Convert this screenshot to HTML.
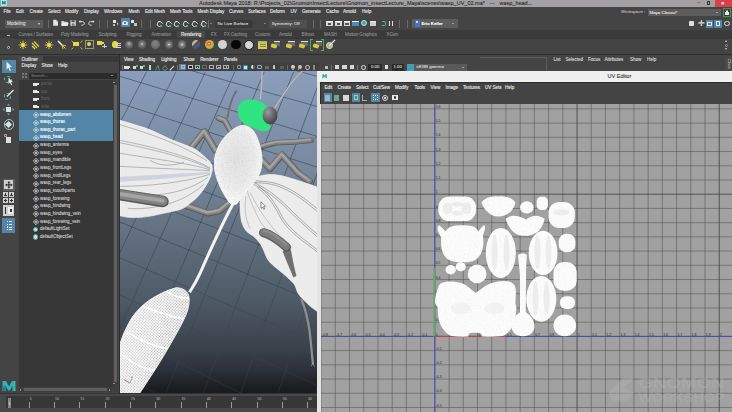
<!DOCTYPE html><html><head><meta charset="utf-8"><title>Autodesk Maya 2018</title><style>
*{margin:0;padding:0;box-sizing:border-box}
html,body{width:732px;height:412px;overflow:hidden;background:#444;font-family:"Liberation Sans",sans-serif;}
body{position:relative;color:#ccc;font-size:5.4px;line-height:1}
.a{position:absolute}
.t{position:absolute;white-space:nowrap;line-height:1;-webkit-text-stroke:0.1px currentColor}
#title{left:0;top:0;width:732px;height:7.1px;background:#a2a0a2}
#menubar{left:0;top:7.3px;width:732px;height:8.7px;background:#444}
#status{left:0;top:16px;width:732px;height:14px;background:#444}
#shelf{left:0;top:30px;width:732px;height:25px;background:#444}
.mi{color:#e8e8e8;font-size:4.6px;top:9.8px;-webkit-text-stroke:0.12px #e8e8e8;letter-spacing:-0.06px}
.tab{color:#9a9a9a;font-size:4.5px;top:32.8px;letter-spacing:-0.06px}
.ol{color:#d0d0d0;font-size:4.5px;-webkit-text-stroke:0.1px currentColor;letter-spacing:-0.04px}
.vm{color:#e8e8e8;font-size:4.5px;top:58.4px;-webkit-text-stroke:0.12px #e8e8e8;letter-spacing:-0.08px}
.um{color:#e8e8e8;font-size:4.6px;top:85.5px;-webkit-text-stroke:0.12px #e8e8e8;letter-spacing:-0.06px}
.ul{fill:#262626;font-size:3.5px;font-family:"Liberation Sans",sans-serif}
</style></head><body>
<div id="title" class="a"></div>
<div class="t" style="left:199px;top:1.2px;font-size:5.5px;color:#2a2a2a">Autodesk Maya 2018: R:\Projects_02\GnomonInsectLecture\Gnomon_insectLecture_Maya\scenes\wasp_UV_02.ma*&nbsp;&nbsp; ---&nbsp;&nbsp; wasp_head...</div>
<div class="a" style="left:1px;top:0;width:6px;height:5.8px;background:#a8eaea"></div>
<svg class="a" style="left:2px;top:1px" width="3.8" height="3.6" viewBox="0 0 7 7" preserveAspectRatio="none"><path d="M0 0 L2 0 L3.5 2.4 L5 0 L7 0 L7 7 L5 7 L3.5 4.6 L2 7 L0 7Z" fill="#1f8a88"/></svg>
<div class="a" style="left:714.6px;top:0;width:17.4px;height:6.5px;background:#d9404a"></div>
<div class="t" style="left:721px;top:-0.2px;font-size:6px;color:#fff">×</div>
<div class="t" style="left:697px;top:-1px;font-size:6px;color:#333">–</div>
<div class="a" style="left:706.5px;top:1.2px;width:3.6px;height:3.6px;border:0.6px solid #333"></div>
<div id="menubar" class="a"></div>
<div class="t mi" style="left:3.5px">File</div>
<div class="t mi" style="left:16px">Edit</div>
<div class="t mi" style="left:29.5px">Create</div>
<div class="t mi" style="left:48px">Select</div>
<div class="t mi" style="left:65px">Modify</div>
<div class="t mi" style="left:84px">Display</div>
<div class="t mi" style="left:104px">Windows</div>
<div class="t mi" style="left:128.5px">Mesh</div>
<div class="t mi" style="left:145px">Edit Mesh</div>
<div class="t mi" style="left:170px">Mesh Tools</div>
<div class="t mi" style="left:197.5px">Mesh Display</div>
<div class="t mi" style="left:229px">Curves</div>
<div class="t mi" style="left:248px">Surfaces</div>
<div class="t mi" style="left:270px">Deform</div>
<div class="t mi" style="left:290.5px">UV</div>
<div class="t mi" style="left:302px">Generate</div>
<div class="t mi" style="left:326px">Cache</div>
<div class="t mi" style="left:343px">Arnold</div>
<div class="t mi" style="left:362px">Help</div>
<div id="status" class="a"></div>
<div class="a" style="left:5px;top:19.5px;width:38px;height:8px;background:#5b5b5b;border-radius:1px"></div>
<div class="t" style="left:7px;top:21.7px;font-size:4.6px;color:#ddd">Modeling</div>
<div class="a" style="left:37.50px;top:22.70px;width:0;height:0;border-left:1.64px solid transparent;border-right:1.64px solid transparent;border-top:2.00px solid #ddd"></div>
<div class="a" style="left:47.5px;top:19.5px;width:0.7px;height:8px;background:#6a6a6a;"></div>
<div class="a" style="left:99px;top:19.5px;width:0.7px;height:8px;background:#6a6a6a;"></div>
<div class="a" style="left:107px;top:19.5px;width:0.7px;height:8px;background:#6a6a6a;"></div>
<div class="a" style="left:140.5px;top:19.5px;width:0.7px;height:8px;background:#6a6a6a;"></div>
<div class="a" style="left:150px;top:19.5px;width:0.7px;height:8px;background:#6a6a6a;"></div>
<div class="a" style="left:202px;top:19.5px;width:0.7px;height:8px;background:#6a6a6a;"></div>
<div class="a" style="left:207.5px;top:19.5px;width:0.7px;height:8px;background:#6a6a6a;"></div>
<div class="a" style="left:313px;top:19.5px;width:0.7px;height:8px;background:#6a6a6a;"></div>
<div class="a" style="left:320px;top:19.5px;width:0.7px;height:8px;background:#6a6a6a;"></div>
<svg class="a" style="left:52px;top:19px" width="46" height="8" viewBox="52 19 46 8"><path d="M53.2 19.8 H56.3 L58 21.5 V25.8 H53.2Z" fill="#e4e4e4"/><path d="M56.3 19.8 V21.5 H58Z" fill="#9a9a9a"/><path d="M61.3 21 H64 L64.6 21.8 H67.8 V25.7 H61.3Z" fill="#d4d4d4"/><path d="M62.3 23 H68.6 L67.6 25.7 H61.3Z" fill="#f0f0f0"/><path d="M70.4 20.2 H75.8 V25.8 H70.4Z" fill="#d8d8d8"/><rect x="71.5" y="20.2" width="3.2" height="2" fill="#555"/><rect x="71.8" y="23.4" width="2.6" height="2.4" fill="#777"/><path d="M79.3 21.6 H82.6 C84.8 21.6,84.8 25.2,82.4 25.2 H81.4" stroke="#e0e0e0" stroke-width="1" fill="none"/><path d="M78.6 21.6 L80.4 20.2 V23Z" fill="#e0e0e0"/><path d="M93.8 21.6 H90.4 C88.2 21.6,88.2 25.2,90.6 25.2 H91.6" stroke="#e0e0e0" stroke-width="1" fill="none"/><path d="M94.5 21.6 L92.7 20.2 V23Z" fill="#e0e0e0"/></svg>
<div class="a" style="left:113px;top:20.3px;width:2.6px;height:2.6px;background:#e4e4e4;"></div>
<div class="a" style="left:113.3px;top:23.6px;width:2px;height:2px;background:#bbb;"></div>
<div class="a" style="left:116.5px;top:21.5px;width:2.2px;height:4px;background:#ddd;clip-path:polygon(0 0,100% 70%,40% 70%,40% 100%,0 100%)"></div>
<div class="a" style="left:120.6px;top:18.3px;width:9px;height:8.8px;background:#5285a6;"></div>
<div class="a" style="left:122.3px;top:20.5px;width:5.6px;height:4.8px;background:#dfe8ee;clip-path:polygon(0 40%,35% 0,100% 30%,100% 100%,0 100%)"></div>
<div class="a" style="left:124px;top:22.3px;width:2.2px;height:2.2px;background:#5285a6;"></div>
<div class="a" style="left:131.3px;top:20.2px;width:3px;height:3px;background:#e4e4e4;"></div>
<div class="a" style="left:134px;top:22.6px;width:3px;height:3px;background:#c4c4c4;"></div>
<div class="a" style="left:157px;top:20.5px;width:5.5px;height:5.5px;border:1.4px solid #d8d8d8;border-radius:50%;border-right-color:transparent;transform:rotate(35deg)"></div>
<div class="a" style="left:160.2px;top:24.8px;width:2.2px;height:2.2px;background:#4aa6a0;"></div>
<div class="a" style="left:165.5px;top:20.5px;width:5.5px;height:5.5px;border:1.4px solid #d8d8d8;border-radius:50%;border-right-color:transparent;transform:rotate(35deg)"></div>
<div class="a" style="left:168.7px;top:24.8px;width:2.2px;height:2.2px;background:#4aa6a0;"></div>
<div class="a" style="left:174px;top:20.5px;width:5.5px;height:5.5px;border:1.4px solid #d8d8d8;border-radius:50%;border-right-color:transparent;transform:rotate(35deg)"></div>
<div class="a" style="left:177.2px;top:24.8px;width:2.2px;height:2.2px;background:#4aa6a0;"></div>
<div class="a" style="left:183px;top:20.5px;width:5.5px;height:5.5px;border:1.4px solid #d8d8d8;border-radius:50%;border-right-color:transparent;transform:rotate(35deg)"></div>
<div class="a" style="left:186.2px;top:24.8px;width:2.2px;height:2.2px;background:#4aa6a0;"></div>
<div class="a" style="left:191.5px;top:20.5px;width:5.5px;height:5.5px;border:1.4px solid #d8d8d8;border-radius:50%;border-right-color:transparent;transform:rotate(35deg)"></div>
<div class="a" style="left:194.7px;top:24.8px;width:2.2px;height:2.2px;background:#4aa6a0;"></div>
<div class="a" style="left:200.5px;top:20.5px;width:5.5px;height:5.5px;border:1.4px solid #d8d8d8;border-radius:50%;border-right-color:transparent;transform:rotate(35deg)"></div>
<div class="a" style="left:203.7px;top:24.8px;width:2.2px;height:2.2px;background:#4aa6a0;"></div>
<div class="a" style="left:210.00px;top:22.96px;width:0;height:0;border-left:1.31px solid transparent;border-right:1.31px solid transparent;border-top:1.60px solid #bbb"></div>
<div class="a" style="left:215px;top:19.5px;width:38px;height:8px;background:#3a3a3a;border-radius:1px"></div>
<div class="t" style="left:217.5px;top:21.9px;font-size:4.3px;color:#ddd">No Live Surface</div>
<div class="a" style="left:264.00px;top:22.96px;width:0;height:0;border-left:1.31px solid transparent;border-right:1.31px solid transparent;border-top:1.60px solid #bbb"></div>
<div class="a" style="left:269px;top:19.5px;width:38px;height:8px;background:#4f4f4f;border-radius:1px"></div>
<div class="t" style="left:271.7px;top:21.9px;font-size:4.4px;color:#ddd">Symmetry: Off</div>
<div class="a" style="left:326px;top:20.5px;width:6.5px;height:5.5px;background:#d6d6d6;"></div>
<div class="a" style="left:326px;top:20.5px;width:6.5px;height:1.4px;background:#f2f2f2;"></div>
<div class="a" style="left:327.5px;top:23px;width:3.5px;height:2px;background:#555;"></div>
<div class="a" style="left:335px;top:20.5px;width:6.5px;height:5.5px;background:#d6d6d6;"></div>
<div class="a" style="left:335px;top:20.5px;width:6.5px;height:1.4px;background:#f2f2f2;"></div>
<div class="a" style="left:336.5px;top:23px;width:3.5px;height:2px;background:#555;"></div>
<div class="a" style="left:343.5px;top:20.5px;width:6.5px;height:5.5px;background:#d6d6d6;"></div>
<div class="a" style="left:343.5px;top:20.5px;width:6.5px;height:1.4px;background:#f2f2f2;"></div>
<div class="a" style="left:345.0px;top:23px;width:3.5px;height:2px;background:#555;"></div>
<div class="a" style="left:352px;top:20.5px;width:6.5px;height:5.5px;background:#d6d6d6;"></div>
<div class="a" style="left:352px;top:20.5px;width:6.5px;height:1.4px;background:#f2f2f2;"></div>
<div class="a" style="left:353.5px;top:23px;width:3.5px;height:2px;background:#555;"></div>
<div class="a" style="left:352px;top:22px;width:6.5px;height:4px;background:#4a8fb8;"></div>
<div class="a" style="left:361px;top:20px;width:6px;height:6px;border-radius:50%;background:#3fa7a8;border:1px solid #bfe4e4"></div>
<div class="a" style="left:370px;top:20.5px;width:6px;height:5.5px;background:#d0d0d0;"></div>
<div class="a" style="left:370px;top:20.5px;width:6px;height:1.5px;background:#f0f0f0;"></div>
<div class="a" style="left:381px;top:20.5px;width:4.5px;height:5.5px;border:1.2px solid #4fb7b0;border-radius:50%;border-left-color:transparent"></div>
<div class="a" style="left:388.5px;top:20.5px;width:1.4px;height:5.5px;background:#e0e0e0;"></div>
<div class="a" style="left:391.5px;top:20.5px;width:1.4px;height:5.5px;background:#e0e0e0;"></div>
<div class="a" style="left:398.5px;top:19.5px;width:0.7px;height:8px;background:#6a6a6a;"></div>
<div class="a" style="left:407px;top:19.5px;width:0.7px;height:8px;background:#6a6a6a;"></div>
<div class="a" style="left:412px;top:19px;width:45.5px;height:8.5px;background:#5d5d5d;border-radius:1px"></div>
<div class="a" style="left:415px;top:20px;width:4.5px;height:6.5px;background:#4a6fd0;border-radius:1px"></div>
<div class="a" style="left:416.3px;top:20.8px;width:2px;height:2px;background:#fff;border-radius:50%"></div>
<div class="t" style="left:421.5px;top:21.9px;font-size:4.3px;color:#fff;font-weight:bold">Eric Keller</div>
<div class="a" style="left:452.00px;top:22.88px;width:0;height:0;border-left:1.48px solid transparent;border-right:1.48px solid transparent;border-top:1.80px solid #ddd"></div>
<div class="t" style="left:621px;top:10.4px;font-size:4.4px;color:#bbb">Workspace :</div>
<div class="a" style="left:647.8px;top:8.7px;width:72.8px;height:7.8px;background:#5d5d5d"></div>
<div class="t" style="left:649.5px;top:10.5px;font-size:4.4px;color:#e8e8e8">Maya Classic*</div>
<div class="a" style="left:715.50px;top:11.88px;width:0;height:0;border-left:1.48px solid transparent;border-right:1.48px solid transparent;border-top:1.80px solid #ddd"></div>
<div class="a" style="left:722.6px;top:8.2px;width:8.8px;height:8.8px;border:0.8px solid #3f9a45;background:#3c3c3c"></div>
<div class="a" style="left:725.2px;top:12.3px;width:3.6px;height:3.2px;background:#e8e8e8;"></div>
<div class="a" style="left:725.8px;top:10.2px;width:2.4px;height:3px;border:0.6px solid #e8e8e8;border-radius:1.2px 1.2px 0 0"></div>
<div class="a" style="left:689px;top:21px;width:5px;height:5px;background:#e0e0e0;border-radius:1px"></div>
<div class="t" style="left:698px;top:19.5px;font-size:8px;color:#e8e8e8">✛</div>
<div class="a" style="left:705.5px;top:19.5px;width:7.5px;height:8px;background:#5285a6;"></div>
<div class="a" style="left:714px;top:19.5px;width:7.5px;height:8px;background:#5285a6;"></div>
<div class="a" style="left:707px;top:21.5px;width:4.5px;height:4px;background:transparent;border:0.7px solid #dfe8ee"></div>
<div class="a" style="left:716px;top:21px;width:3.5px;height:5px;background:transparent;border:0.7px solid #dfe8ee"></div>
<div class="a" style="left:724px;top:20.5px;width:5.5px;height:5.5px;border-radius:50%;border:1.5px solid #ddd"></div>
<div id="shelf" class="a"></div>
<div class="a" style="left:0px;top:30.2px;width:732px;height:7.6px;background:#3b3b3b;"></div>
<div class="a" style="left:7px;top:34.5px;width:3px;height:1.2px;background:#bbb;"></div>
<div class="a" style="left:7.2px;top:46px;width:3.2px;height:3.2px;border:0.8px solid #bbb;border-radius:50%"></div>
<div class="a" style="left:176.5px;top:30.5px;width:28.5px;height:7.3px;background:#4a4a4a"></div>
<div class="t tab" style="left:18.5px;color:#8e8e8e">Curves / Surfaces</div>
<div class="t tab" style="left:61px;color:#8e8e8e">Poly Modeling</div>
<div class="t tab" style="left:98.5px;color:#8e8e8e">Sculpting</div>
<div class="t tab" style="left:126.5px;color:#8e8e8e">Rigging</div>
<div class="t tab" style="left:151.5px;color:#8e8e8e">Animation</div>
<div class="t tab" style="left:181px;color:#eee">Rendering</div>
<div class="t tab" style="left:211px;color:#8e8e8e">FX</div>
<div class="t tab" style="left:224px;color:#8e8e8e">FX Caching</div>
<div class="t tab" style="left:255px;color:#8e8e8e">Custom</div>
<div class="t tab" style="left:279px;color:#8e8e8e">Arnold</div>
<div class="t tab" style="left:301.5px;color:#8e8e8e">Bifrost</div>
<div class="t tab" style="left:324px;color:#8e8e8e">MASH</div>
<div class="t tab" style="left:345px;color:#8e8e8e">Motion Graphics</div>
<div class="t tab" style="left:386.5px;color:#8e8e8e">XGen</div>
<div class="a" style="left:14px;top:38px;width:718px;height:0.5px;background:#383838;"></div>
<svg class="a" style="left:17.5px;top:39.5px" width="10" height="10" viewBox="-5 -5 10 10"><g stroke="#e8d64a" stroke-width="0.9"><line x1="2.20" y1="0.00" x2="4.30" y2="0.00"/><line x1="1.56" y1="1.56" x2="3.04" y2="3.04"/><line x1="0.00" y1="2.20" x2="0.00" y2="4.30"/><line x1="-1.56" y1="1.56" x2="-3.04" y2="3.04"/><line x1="-2.20" y1="0.00" x2="-4.30" y2="0.00"/><line x1="-1.56" y1="-1.56" x2="-3.04" y2="-3.04"/><line x1="-0.00" y1="-2.20" x2="-0.00" y2="-4.30"/><line x1="1.56" y1="-1.56" x2="3.04" y2="-3.04"/></g><circle r="2.2" fill="#e8d64a"/></svg>
<svg class="a" style="left:31px;top:39.5px" width="10" height="10" viewBox="0 0 10 10"><g stroke="#e8d64a" stroke-width="1.1"><line x1="1" y1="3" x2="6" y2="8"/><line x1="3" y1="1.5" x2="8" y2="6.5"/><line x1="1" y1="6" x2="4" y2="9"/></g></svg>
<svg class="a" style="left:44px;top:39.5px" width="10" height="10" viewBox="-5 -5 10 10"><g stroke="#e8d64a" stroke-width="0.9"><line x1="2.20" y1="0.00" x2="4.30" y2="0.00"/><line x1="1.56" y1="1.56" x2="3.04" y2="3.04"/><line x1="0.00" y1="2.20" x2="0.00" y2="4.30"/><line x1="-1.56" y1="1.56" x2="-3.04" y2="3.04"/><line x1="-2.20" y1="0.00" x2="-4.30" y2="0.00"/><line x1="-1.56" y1="-1.56" x2="-3.04" y2="-3.04"/><line x1="-0.00" y1="-2.20" x2="-0.00" y2="-4.30"/><line x1="1.56" y1="-1.56" x2="3.04" y2="-3.04"/></g><circle r="2.2" fill="#e8d64a"/></svg>
<svg class="a" style="left:57px;top:39.5px" width="11" height="10" viewBox="0 0 11 10"><line x1="1" y1="1" x2="5" y2="5" stroke="#eee" stroke-width="1.6"/><g stroke="#e8d64a" stroke-width="0.9"><line x1="5" y1="5" x2="9" y2="6"/><line x1="5" y1="5" x2="6" y2="9"/><line x1="5" y1="5" x2="8.5" y2="8.5"/></g></svg>
<div class="a" style="left:73.4px;top:42.4px;width:5.6px;height:3.8px;background:#e8d64a;"></div>
<svg class="a" style="left:71px;top:39.5px" width="12" height="10" viewBox="0 0 12 10"><g stroke="#e8d64a" stroke-width="0.8"><line x1="0.5" y1="0.8" x2="2.5" y2="2.5"/><line x1="11.5" y1="0.8" x2="9.5" y2="2.5"/><line x1="0.5" y1="9.2" x2="2.5" y2="7.5"/><line x1="11.5" y1="9.2" x2="9.5" y2="7.5"/></g></svg>
<div class="a" style="left:84.5px;top:39.5px;width:9.5px;height:9.5px;background:transparent;border:0.7px solid #9a9478"></div>
<div class="a" style="left:87.3px;top:42.3px;width:4px;height:4px;border-radius:50%;background:#e8d64a"></div>
<div class="a" style="left:96.8px;top:41.3px;width:5px;height:3.4px;background:#e8d64a;"></div>
<div class="a" style="left:101.8px;top:41.8px;width:2.2px;height:2.4px;background:#e8d64a;"></div>
<div class="a" style="left:104px;top:44px;width:0.6px;height:4.4px;background:#ccc;"></div>
<div class="a" style="left:101.8px;top:46px;width:5px;height:0.6px;background:#ccc;"></div>
<div class="a" style="left:111.7px;top:40.6px;width:6.6px;height:7px;border-radius:50%;background:#e8d64a"></div>
<div class="a" style="left:116.3px;top:43px;width:5px;height:0.7px;background:#ddd;"></div>
<div class="a" style="left:116.3px;top:44.8px;width:5px;height:0.7px;background:#ddd;"></div>
<div class="a" style="left:116.3px;top:46.6px;width:5px;height:0.7px;background:#ddd;"></div>
<div class="a" style="left:124.6px;top:40.5px;width:8.2px;height:8.2px;border-radius:50%;background:radial-gradient(circle at 50% 35%,#c0c0c0 0,#7c7c7c 28%,#565656 70%,#484848 100%)"></div>
<div class="a" style="left:137.79999999999998px;top:40.300000000000004px;width:8.6px;height:8.6px;border-radius:50%;background:radial-gradient(circle at 50% 45%,#d8d8d8 0,#808080 22%,#5c5c5c 60%,#484848 100%)"></div>
<div class="a" style="left:151.39999999999998px;top:40.300000000000004px;width:8.6px;height:8.6px;border-radius:50%;background:radial-gradient(circle at 45% 40%,#868686 0,#707070 50%,#505050 100%)"></div>
<div class="a" style="left:164.6px;top:40.300000000000004px;width:8.6px;height:8.6px;border-radius:50%;background:radial-gradient(circle at 50% 50%,#fff 0,#909090 18%,#5e5e5e 60%,#484848 100%)"></div>
<div class="a" style="left:177.79999999999998px;top:40.300000000000004px;width:8.6px;height:8.6px;border-radius:50%;background:radial-gradient(circle at 50% 50%,#d0d0d0 0,#808080 32%,#525252 80%,#484848 100%)"></div>
<div class="a" style="left:191.79999999999998px;top:40.300000000000004px;width:8.6px;height:8.6px;border-radius:50%;background:linear-gradient(135deg,#556 0,#c8c89a 30%,#444 45%,#5a5a8a 60%,#33346a 100%)"></div>
<div class="a" style="left:204.6px;top:40.1px;width:9.0px;height:9.0px;border-radius:50%;background:radial-gradient(circle at 45% 40%,#fff 0,#e84a3a 18%,#e8a83a 40%,#7ec04a 65%,#3f9a5a 100%)"></div>
<div class="a" style="left:217.9px;top:40.0px;width:9.4px;height:9.4px;border-radius:50%;background:#d2d2d2"></div>
<div class="a" style="left:231.3px;top:40.0px;width:9.4px;height:9.4px;border-radius:50%;background:#080808"></div>
<div class="a" style="left:244.2px;top:40px;width:9.6px;height:9.6px;border-radius:50%;background:#d4d4d4;border:1.1px solid #111"></div>
<div class="a" style="left:258px;top:40.5px;width:9px;height:8.5px;background:#d8ce52;"></div>
<div class="a" style="left:258px;top:40.5px;width:9px;height:2px;background:#b9b37a;"></div>
<div class="a" style="left:259.5px;top:44px;width:6px;height:1px;background:#8a8430;"></div>
<div class="a" style="left:259.5px;top:46px;width:6px;height:1px;background:#8a8430;"></div>
<div class="a" style="left:273.5px;top:40.5px;width:6.5px;height:5px;background:#6a6a6a;border-top:1px solid #ddd"></div>
<div class="a" style="left:271px;top:44px;width:6px;height:3.5px;background:#d8c840;border-radius:1.5px;transform:rotate(15deg)"></div>
<div class="a" style="left:288.0px;top:40.5px;width:6.5px;height:5px;background:#6a6a6a;border-top:1px solid #ddd"></div>
<div class="a" style="left:285.5px;top:44px;width:6px;height:3.5px;background:#d8c840;border-radius:1.5px;transform:rotate(15deg)"></div>
<div class="a" style="left:301.0px;top:40.5px;width:6.5px;height:5px;background:#6a6a6a;border-top:1px solid #ddd"></div>
<div class="a" style="left:298.5px;top:44px;width:6px;height:3.5px;background:#d8c840;border-radius:1.5px;transform:rotate(15deg)"></div>
<div class="a" style="left:315.5px;top:40.5px;width:6.5px;height:5px;background:#6a6a6a;border-top:1px solid #ddd"></div>
<div class="a" style="left:313px;top:44px;width:6px;height:3.5px;background:#d8c840;border-radius:1.5px;transform:rotate(15deg)"></div>
<div class="a" style="left:309.5px;top:38.8px;width:14px;height:11.5px;border-left:1px solid #4caf50;border-right:1px solid #4caf50"></div>
<div class="a" style="left:309.5px;top:38.8px;width:3px;height:0.8px;background:#4caf50;"></div>
<div class="a" style="left:320.5px;top:38.8px;width:3px;height:0.8px;background:#4caf50;"></div>
<div class="a" style="left:309.5px;top:49.5px;width:3px;height:0.8px;background:#4caf50;"></div>
<div class="a" style="left:320.5px;top:49.5px;width:3px;height:0.8px;background:#4caf50;"></div>
<div class="a" style="left:325.5px;top:42px;width:7px;height:7px;border-radius:50%;background:#b8b070;border:1px solid #ddd"></div>
<svg class="a" style="left:328px;top:39px" width="8" height="8" viewBox="0 0 8 8"><line x1="1" y1="7" x2="7" y2="1" stroke="#eee" stroke-width="1.1"/></svg>
<div class="a" style="left:724.80px;top:39.52px;width:0;height:0;border-left:1.80px solid transparent;border-right:1.80px solid transparent;border-bottom:2.20px solid #d0d0d0"></div>
<div class="a" style="left:725.2px;top:43.5px;width:3px;height:3px;border:0.7px solid #999;border-radius:50%"></div>
<div class="a" style="left:724.80px;top:47.92px;width:0;height:0;border-left:1.80px solid transparent;border-right:1.80px solid transparent;border-top:2.20px solid #d0d0d0"></div>
<div class="a" style="left:0px;top:54px;width:732px;height:1.2px;background:#2e2e2e;"></div>
<div class="a" style="left:0px;top:55px;width:18px;height:338px;background:#444;"></div>
<div class="a" style="left:2px;top:59.5px;width:13.5px;height:13.5px;background:#5285a6;"></div>
<svg class="a" style="left:5px;top:61px" width="8" height="11" viewBox="0 0 8 11"><path d="M1.5 0.5 L1.5 8.5 L3.4 6.8 L4.8 10 L6 9.4 L4.6 6.3 L7 6.1 Z" fill="#e8e8e8"/></svg>
<div class="a" style="left:3.5px;top:75.5px;width:8px;height:7px;border:0.9px dashed #58b8a8;border-radius:50%"></div>
<svg class="a" style="left:7px;top:77.2px" width="7" height="9" viewBox="0 0 8 11"><path d="M1.5 0.5 L1.5 8.5 L3.4 6.8 L4.8 10 L6 9.4 L4.6 6.3 L7 6.1 Z" fill="#e8e8e8"/></svg>
<div class="a" style="left:3.5px;top:93px;width:7px;height:6.5px;border:0.9px dashed #58b8a8;border-radius:50%"></div>
<svg class="a" style="left:5px;top:89px" width="10" height="9" viewBox="0 0 10 9"><line x1="2" y1="7.5" x2="8.5" y2="1" stroke="#e8e8e8" stroke-width="1.3"/></svg>
<div class="a" style="left:6px;top:106.5px;width:5px;height:5px;background:#e0e0e0;"></div>
<svg class="a" style="left:2px;top:102.5px" width="13" height="13" viewBox="0 0 13 13"><g fill="#58b8a8"><path d="M6.5 0.5 L8 2.5 L5 2.5Z"/><path d="M6.5 12.5 L8 10.5 L5 10.5Z"/><path d="M0.5 6.5 L2.5 5 L2.5 8Z"/><path d="M12.5 6.5 L10.5 5 L10.5 8Z"/></g></svg>
<div class="a" style="left:3.5px;top:119px;width:10.5px;height:10.5px;border:1px solid #8fcfc4;border-radius:50%"></div>
<div class="a" style="left:6.3px;top:121.8px;width:5px;height:5px;background:#e0e0e0;transform:rotate(45deg)"></div>
<div class="a" style="left:6px;top:137px;width:5px;height:5.5px;background:#e0e0e0;"></div>
<div class="a" style="left:4px;top:134px;width:3px;height:3px;background:transparent;border:0.6px dashed #999"></div>
<div class="a" style="left:2.5px;top:178.5px;width:12px;height:12px;background:#5e5e5e;"></div>
<div class="a" style="left:3.6px;top:179.6px;width:9.8px;height:9.8px;background:#cfcfcf;"></div>
<svg class="a" style="left:3.6px;top:179.6px" width="9.8" height="9.8" viewBox="0 0 10 10"><path d="M5 1 L6.5 3 H5.6 V4.4 H7 V3.5 L9 5 L7 6.5 V5.6 H5.6 V7 H6.5 L5 9 L3.5 7 H4.4 V5.6 H3 V6.5 L1 5 L3 3.5 V4.4 H4.4 V3 H3.5Z" fill="#333"/></svg>
<div class="a" style="left:3px;top:192.2px;width:5.3px;height:5.3px;background:#cfcfcf;"></div>
<div class="a" style="left:4.1px;top:194.5px;width:3.1px;height:0.7px;background:#333;"></div>
<div class="a" style="left:5.3px;top:193.29999999999998px;width:0.7px;height:3.1px;background:#333;"></div>
<div class="a" style="left:8.9px;top:192.2px;width:5.3px;height:5.3px;background:#cfcfcf;"></div>
<div class="a" style="left:10.0px;top:194.5px;width:3.1px;height:0.7px;background:#333;"></div>
<div class="a" style="left:11.2px;top:193.29999999999998px;width:0.7px;height:3.1px;background:#333;"></div>
<div class="a" style="left:3px;top:198.1px;width:5.3px;height:5.3px;background:#cfcfcf;"></div>
<div class="a" style="left:4.1px;top:200.4px;width:3.1px;height:0.7px;background:#333;"></div>
<div class="a" style="left:5.3px;top:199.2px;width:0.7px;height:3.1px;background:#333;"></div>
<div class="a" style="left:8.9px;top:198.1px;width:5.3px;height:5.3px;background:#cfcfcf;"></div>
<div class="a" style="left:10.0px;top:200.4px;width:3.1px;height:0.7px;background:#333;"></div>
<div class="a" style="left:11.2px;top:199.2px;width:0.7px;height:3.1px;background:#333;"></div>
<div class="a" style="left:3px;top:205.3px;width:11.2px;height:10.6px;background:#cfcfcf;"></div>
<div class="a" style="left:5.2px;top:206.8px;width:1.2px;height:7.6px;background:#333;"></div>
<div class="a" style="left:8.2px;top:207.2px;width:4.8px;height:6.8px;background:#eee;"></div>
<div class="a" style="left:9.5px;top:209.4px;width:2.2px;height:2.2px;background:#333;"></div>
<div class="a" style="left:1.6px;top:218.4px;width:13.2px;height:14.8px;background:#5285a6;"></div>
<div class="a" style="left:6.6px;top:221.2px;width:1.2px;height:1.2px;background:#dfe8ee;"></div>
<div class="a" style="left:9.1px;top:221.4px;width:3px;height:0.8px;background:#dfe8ee;"></div>
<div class="a" style="left:6.6px;top:223.79999999999998px;width:1.2px;height:1.2px;background:#dfe8ee;"></div>
<div class="a" style="left:9.1px;top:224.0px;width:3px;height:0.8px;background:#dfe8ee;"></div>
<div class="a" style="left:6.6px;top:226.39999999999998px;width:1.2px;height:1.2px;background:#dfe8ee;"></div>
<div class="a" style="left:9.1px;top:226.6px;width:3px;height:0.8px;background:#dfe8ee;"></div>
<div class="a" style="left:6.6px;top:229.0px;width:1.2px;height:1.2px;background:#dfe8ee;"></div>
<div class="a" style="left:9.1px;top:229.20000000000002px;width:3px;height:0.8px;background:#dfe8ee;"></div>
<svg class="a" style="left:1.5px;top:380px" width="14" height="12" viewBox="0 0 14 12"><path d="M0.5 1 L4 1 L7 6.5 L10 1 L13.5 1 L13.5 11 L10.5 11 L10.5 5.5 L7.8 10.5 L6.2 10.5 L3.5 5.5 L3.5 11 L0.5 11Z" fill="#2fb5b8"/><path d="M0.5 6 L3.5 5.5 L3.5 11 L0.5 11Z" fill="#1b8a90"/></svg>
<div class="a" style="left:18px;top:55px;width:101px;height:338px;background:#444;"></div>
<div class="a" style="left:18px;top:55.5px;width:24.5px;height:6.8px;background:#484848;"></div>
<div class="a" style="left:42.5px;top:55.5px;width:76.5px;height:6.3px;background:#383838;"></div>
<div class="t" style="left:21.5px;top:57.6px;font-size:4.7px;color:#eee">Outliner</div>
<div class="t" style="left:21.5px;top:64.1px;font-size:4.6px;letter-spacing:-0.06px;color:#e8e8e8">Display</div>
<div class="t" style="left:41.5px;top:64.1px;font-size:4.6px;letter-spacing:-0.06px;color:#e8e8e8">Show</div>
<div class="t" style="left:58px;top:64.1px;font-size:4.6px;letter-spacing:-0.06px;color:#e8e8e8">Help</div>
<div class="a" style="left:29px;top:72.5px;width:87.5px;height:6.5px;background:#2b2b2b;"></div>
<div class="t" style="left:31px;top:73.8px;font-size:4.3px;color:#777">Search...</div>
<div class="a" style="left:110.50px;top:75.38px;width:0;height:0;border-left:1.48px solid transparent;border-right:1.48px solid transparent;border-top:1.80px solid #ddd"></div>
<div class="a" style="left:21.5px;top:72.5px;width:1.6px;height:1.6px;background:transparent;border:0.5px solid #777"></div>
<div class="a" style="left:24.5px;top:72.5px;width:1.6px;height:1.6px;background:transparent;border:0.5px solid #777"></div>
<div class="a" style="left:21.5px;top:76px;width:1.6px;height:1.6px;background:transparent;border:0.5px solid #777"></div>
<div class="a" style="left:24.5px;top:76px;width:1.6px;height:1.6px;background:transparent;border:0.5px solid #777"></div>
<div class="a" style="left:18.5px;top:80px;width:94px;height:307px;background:#373737;"></div>
<div class="a" style="left:18.5px;top:110.4px;width:94px;height:30.6px;background:#5285a6;"></div>
<div class="a" style="left:112.5px;top:80px;width:5.5px;height:307px;background:#3e3e3e;"></div>
<div class="a" style="left:113.6px;top:85px;width:3.2px;height:296.5px;background:#606060;"></div>
<div class="a" style="left:113.00px;top:81.58px;width:0;height:0;border-left:1.48px solid transparent;border-right:1.48px solid transparent;border-bottom:1.80px solid #ddd"></div>
<div class="a" style="left:113.00px;top:383.38px;width:0;height:0;border-left:1.48px solid transparent;border-right:1.48px solid transparent;border-top:1.80px solid #ddd"></div>
<div class="a" style="left:18.5px;top:387px;width:99px;height:5.2px;background:#3e3e3e;"></div>
<div class="a" style="left:24px;top:388.2px;width:83px;height:2.8px;background:#606060;"></div>
<div class="a" style="left:20.00px;top:388.76px;width:0;height:0;border-top:1.31px solid transparent;border-bottom:1.31px solid transparent;border-right:1.60px solid #ddd"></div>
<div class="a" style="left:108.50px;top:388.76px;width:0;height:0;border-top:1.31px solid transparent;border-bottom:1.31px solid transparent;border-left:1.60px solid #ddd"></div>
<div class="a" style="left:33px;top:82.60000000000001px;width:4px;height:3.2px;background:#e8e8e8;"></div>
<div class="a" style="left:37.3px;top:83.10000000000001px;width:1.5px;height:2.2px;background:#e8e8e8;"></div>
<div class="t ol" style="left:41px;top:82.10px;color:#5c5c5c">persp</div>
<div class="a" style="left:33px;top:90.15px;width:4px;height:3.2px;background:#e8e8e8;"></div>
<div class="a" style="left:37.3px;top:90.65px;width:1.5px;height:2.2px;background:#e8e8e8;"></div>
<div class="t ol" style="left:41px;top:89.65px;color:#5c5c5c">top</div>
<div class="a" style="left:33px;top:97.7px;width:4px;height:3.2px;background:#e8e8e8;"></div>
<div class="a" style="left:37.3px;top:98.2px;width:1.5px;height:2.2px;background:#e8e8e8;"></div>
<div class="t ol" style="left:41px;top:97.20px;color:#5c5c5c">front</div>
<div class="a" style="left:33px;top:105.25000000000001px;width:4px;height:3.2px;background:#e8e8e8;"></div>
<div class="a" style="left:37.3px;top:105.75000000000001px;width:1.5px;height:2.2px;background:#e8e8e8;"></div>
<div class="t ol" style="left:41px;top:104.75px;color:#5c5c5c">side</div>
<svg class="a" style="left:32.5px;top:112.00px" width="6" height="6" viewBox="0 0 6 6"><path d="M3 0.3 L5.7 3 L3 5.7 L0.3 3Z" fill="none" stroke="#eee" stroke-width="0.8"/><circle cx="3" cy="3" r="0.9" fill="#eee"/></svg>
<div class="t ol" style="left:40px;top:112.50px;color:#fff;font-weight:normal">wasp_abdomen</div>
<svg class="a" style="left:32.5px;top:119.64px" width="6" height="6" viewBox="0 0 6 6"><path d="M3 0.3 L5.7 3 L3 5.7 L0.3 3Z" fill="none" stroke="#eee" stroke-width="0.8"/><circle cx="3" cy="3" r="0.9" fill="#eee"/></svg>
<div class="t ol" style="left:40px;top:120.14px;color:#fff;font-weight:normal">wasp_thorax</div>
<svg class="a" style="left:32.5px;top:127.29px" width="6" height="6" viewBox="0 0 6 6"><path d="M3 0.3 L5.7 3 L3 5.7 L0.3 3Z" fill="none" stroke="#eee" stroke-width="0.8"/><circle cx="3" cy="3" r="0.9" fill="#eee"/></svg>
<div class="t ol" style="left:40px;top:127.79px;color:#fff;font-weight:normal">wasp_thorax_part</div>
<svg class="a" style="left:32.5px;top:134.93px" width="6" height="6" viewBox="0 0 6 6"><path d="M3 0.3 L5.7 3 L3 5.7 L0.3 3Z" fill="none" stroke="#eee" stroke-width="0.8"/><circle cx="3" cy="3" r="0.9" fill="#eee"/></svg>
<div class="t ol" style="left:40px;top:135.43px;color:#fff;font-weight:normal">wasp_head</div>
<svg class="a" style="left:32.5px;top:142.58px" width="6" height="6" viewBox="0 0 6 6"><path d="M3 0.3 L5.7 3 L3 5.7 L0.3 3Z" fill="none" stroke="#eee" stroke-width="0.8"/><circle cx="3" cy="3" r="0.9" fill="#eee"/></svg>
<div class="t ol" style="left:40px;top:143.08px;color:#cfcfcf;font-weight:normal">wasp_antenna</div>
<svg class="a" style="left:32.5px;top:150.22px" width="6" height="6" viewBox="0 0 6 6"><path d="M3 0.3 L5.7 3 L3 5.7 L0.3 3Z" fill="none" stroke="#eee" stroke-width="0.8"/><circle cx="3" cy="3" r="0.9" fill="#eee"/></svg>
<div class="t ol" style="left:40px;top:150.72px;color:#cfcfcf;font-weight:normal">wasp_eyes</div>
<svg class="a" style="left:32.5px;top:157.87px" width="6" height="6" viewBox="0 0 6 6"><path d="M3 0.3 L5.7 3 L3 5.7 L0.3 3Z" fill="none" stroke="#eee" stroke-width="0.8"/><circle cx="3" cy="3" r="0.9" fill="#eee"/></svg>
<div class="t ol" style="left:40px;top:158.37px;color:#cfcfcf;font-weight:normal">wasp_mandible</div>
<svg class="a" style="left:32.5px;top:165.51px" width="6" height="6" viewBox="0 0 6 6"><path d="M3 0.3 L5.7 3 L3 5.7 L0.3 3Z" fill="none" stroke="#eee" stroke-width="0.8"/><circle cx="3" cy="3" r="0.9" fill="#eee"/></svg>
<div class="t ol" style="left:40px;top:166.01px;color:#cfcfcf;font-weight:normal">wasp_frontLegs</div>
<svg class="a" style="left:32.5px;top:173.16px" width="6" height="6" viewBox="0 0 6 6"><path d="M3 0.3 L5.7 3 L3 5.7 L0.3 3Z" fill="none" stroke="#eee" stroke-width="0.8"/><circle cx="3" cy="3" r="0.9" fill="#eee"/></svg>
<div class="t ol" style="left:40px;top:173.66px;color:#cfcfcf;font-weight:normal">wasp_midlLegs</div>
<svg class="a" style="left:32.5px;top:180.80px" width="6" height="6" viewBox="0 0 6 6"><path d="M3 0.3 L5.7 3 L3 5.7 L0.3 3Z" fill="none" stroke="#eee" stroke-width="0.8"/><circle cx="3" cy="3" r="0.9" fill="#eee"/></svg>
<div class="t ol" style="left:40px;top:181.30px;color:#cfcfcf;font-weight:normal">wasp_rear_legs</div>
<svg class="a" style="left:32.5px;top:188.45px" width="6" height="6" viewBox="0 0 6 6"><path d="M3 0.3 L5.7 3 L3 5.7 L0.3 3Z" fill="none" stroke="#eee" stroke-width="0.8"/><circle cx="3" cy="3" r="0.9" fill="#eee"/></svg>
<div class="t ol" style="left:40px;top:188.95px;color:#cfcfcf;font-weight:normal">wasp_mouthparts</div>
<svg class="a" style="left:32.5px;top:196.09px" width="6" height="6" viewBox="0 0 6 6"><path d="M3 0.3 L5.7 3 L3 5.7 L0.3 3Z" fill="none" stroke="#eee" stroke-width="0.8"/><circle cx="3" cy="3" r="0.9" fill="#eee"/></svg>
<div class="t ol" style="left:40px;top:196.59px;color:#cfcfcf;font-weight:normal">wasp_forewing</div>
<svg class="a" style="left:32.5px;top:203.74px" width="6" height="6" viewBox="0 0 6 6"><path d="M3 0.3 L5.7 3 L3 5.7 L0.3 3Z" fill="none" stroke="#eee" stroke-width="0.8"/><circle cx="3" cy="3" r="0.9" fill="#eee"/></svg>
<div class="t ol" style="left:40px;top:204.24px;color:#cfcfcf;font-weight:normal">wasp_hindwing</div>
<svg class="a" style="left:32.5px;top:211.38px" width="6" height="6" viewBox="0 0 6 6"><path d="M3 0.3 L5.7 3 L3 5.7 L0.3 3Z" fill="none" stroke="#eee" stroke-width="0.8"/><circle cx="3" cy="3" r="0.9" fill="#eee"/></svg>
<div class="t ol" style="left:40px;top:211.88px;color:#cfcfcf;font-weight:normal">wasp_hindwing_vein</div>
<svg class="a" style="left:32.5px;top:219.03px" width="6" height="6" viewBox="0 0 6 6"><path d="M3 0.3 L5.7 3 L3 5.7 L0.3 3Z" fill="none" stroke="#eee" stroke-width="0.8"/><circle cx="3" cy="3" r="0.9" fill="#eee"/></svg>
<div class="t ol" style="left:40px;top:219.53px;color:#cfcfcf;font-weight:normal">wasp_forewing_vein</div>
<div class="a" style="left:32.5px;top:226.50px;width:5.6px;height:5.6px;border-radius:50%;background:#cfe0dc;border:0.7px solid #5aa89a"></div>
<div class="t ol" style="left:40px;top:227.00px;color:#cfcfcf">defaultLightSet</div>
<div class="a" style="left:32.5px;top:234.15px;width:5.6px;height:5.6px;border-radius:50%;background:#cfe0dc;border:0.7px solid #5aa89a"></div>
<div class="t ol" style="left:40px;top:234.65px;color:#cfcfcf">defaultObjectSet</div>
<div class="a" style="left:118.5px;top:55px;width:1.5px;height:338px;background:#2e2e2e;"></div>
<div class="a" style="left:120px;top:55px;width:612px;height:17px;background:#444;"></div>
<div class="t vm" style="left:124px">View</div>
<div class="t vm" style="left:138.9px">Shading</div>
<div class="t vm" style="left:161.2px">Lighting</div>
<div class="t vm" style="left:183.6px">Show</div>
<div class="t vm" style="left:200.2px">Renderer</div>
<div class="t vm" style="left:223.9px">Panels</div>
<div class="a" style="left:120px;top:63.3px;width:198px;height:7.5px;background:#404040;"></div>
<div class="a" style="left:121.5px;top:64.8px;width:0.6px;height:5px;background:#777;"></div>
<div class="a" style="left:124px;top:65.8px;width:4.6px;height:3.2px;background:#e0e0e0;"></div>
<div class="a" style="left:128.6px;top:66.4px;width:1.6px;height:2px;background:#e0e0e0;"></div>
<div class="a" style="left:132.6px;top:66px;width:3.4px;height:3.2px;background:#d8d8d8;"></div>
<div class="a" style="left:135.6px;top:65px;width:2.6px;height:2.4px;background:#56b09c;"></div>
<div class="a" style="left:139.8px;top:66px;width:3.4px;height:3.2px;background:#d8d8d8;"></div>
<div class="a" style="left:142.8px;top:65px;width:2.6px;height:2.4px;background:#56b09c;"></div>
<div class="a" style="left:148.8px;top:65px;width:1.8px;height:4.6px;background:#d0d0d0;"></div>
<svg class="a" style="left:154px;top:64.5px" width="24" height="6" viewBox="154 64.5 24 6"><path d="M155.5 70 L158 65 L159.5 70" stroke="#4fae98" stroke-width="0.8" fill="none"/><path d="M162.5 68 L165 65 L167.5 68 L165 70Z" stroke="#6fb8a8" stroke-width="0.7" fill="none"/><path d="M169.8 69.8 L174 65.4" stroke="#d8d8d8" stroke-width="1.1"/></svg>
<div class="a" style="left:177px;top:64.8px;width:0.6px;height:5px;background:#777;"></div>
<div class="a" style="left:179.2px;top:63.8px;width:7.2px;height:6.6px;background:#5d7d99;"></div>
<div class="a" style="left:180.8px;top:65.2px;width:4px;height:3.8px;background:#7d97ad;border:0.5px solid #a8bccb"></div>
<div class="a" style="left:187.8px;top:65.4px;width:5px;height:3.8px;background:#222;border:0.7px solid #c8c8c8"></div>
<div class="a" style="left:194.8px;top:65.2px;width:5px;height:4.2px;background:transparent;border:0.7px solid #8fc0b4"></div>
<div class="a" style="left:196.6px;top:66.6px;width:1.4px;height:1.4px;background:#cfe8e0;border-radius:50%"></div>
<div class="a" style="left:201.8px;top:65.2px;width:5px;height:4.2px;background:transparent;border:0.6px solid #6a6a6a"></div>
<div class="a" style="left:209.4px;top:65.2px;width:5px;height:4.2px;background:transparent;border:0.7px solid #b0b0b0"></div>
<div class="a" style="left:216.3px;top:65.2px;width:5px;height:4.2px;background:transparent;border:0.7px solid #b0b0b0"></div>
<div class="a" style="left:217.8px;top:66.6px;width:2px;height:1.6px;background:#9ad;"></div>
<div class="a" style="left:223.4px;top:65.2px;width:5.6px;height:4.2px;background:transparent;border:0.7px solid #b0b0b0"></div>
<div class="a" style="left:225.9px;top:65.2px;width:0.6px;height:4.2px;background:#b0b0b0;"></div>
<div class="a" style="left:232.5px;top:64.8px;width:0.6px;height:5px;background:#666;"></div>
<div class="a" style="left:236.6px;top:65.2px;width:4.2px;height:4.2px;background:transparent;border:0.7px solid #9a9a9a;border-radius:1px"></div>
<div class="a" style="left:243px;top:64.6px;width:5px;height:5.4px;background:#2f8fa8;border-radius:1px"></div>
<div class="a" style="left:244.2px;top:65.8px;width:2.6px;height:2.8px;background:#bfe6ee;"></div>
<div class="a" style="left:251.3px;top:65.2px;width:3.6px;height:4.2px;border-radius:50%;background:linear-gradient(90deg,#ddd 50%,#666 50%)"></div>
<div class="a" style="left:257.4px;top:65.2px;width:4.2px;height:4.2px;background:transparent;border:0.7px solid #7fb8c8;border-radius:1px"></div>
<div class="a" style="left:265.2px;top:65.6px;width:3.4px;height:3.4px;background:#6a6a6a;"></div>
<div class="a" style="left:272.6px;top:65px;width:2.6px;height:4.4px;background:#c8c8c8;border-radius:1.3px 1.3px 0 0"></div>
<div class="a" style="left:279.8px;top:65.6px;width:4.6px;height:3.2px;background:#5c5c5c;"></div>
<div class="a" style="left:286.5px;top:64.8px;width:0.6px;height:5px;background:#666;"></div>
<div class="a" style="left:290.8px;top:64.8px;width:4.2px;height:4.2px;border-radius:50%;background:#d4d4d4"></div>
<div class="a" style="left:292.2px;top:68.4px;width:1.4px;height:1.6px;background:#999;"></div>
<div class="a" style="left:298px;top:64.8px;width:3.8px;height:3.8px;border-radius:50%;background:#c0c0c0"></div>
<div class="a" style="left:297.6px;top:68px;width:1.6px;height:1.6px;background:#999;"></div>
<div class="a" style="left:305.3px;top:64.8px;width:5px;height:5px;border-radius:50%;border:0.9px solid #d0d0d0"></div>
<div class="a" style="left:313.2px;top:65px;width:2.2px;height:4.6px;background:#888;"></div>
<div class="a" style="left:324.6px;top:65.5px;width:3px;height:3.6px;background:#bbb;"></div>
<div class="a" style="left:331.3px;top:64.8px;width:0.6px;height:5px;background:#777;"></div>
<div class="a" style="left:335px;top:65.3px;width:4.3px;height:4px;background:#d8d8d8;"></div>
<div class="a" style="left:342.3px;top:65.3px;width:4.3px;height:4px;background:#d8d8d8;"></div>
<div class="a" style="left:349.7px;top:65.3px;width:4.3px;height:4px;background:#d8d8d8;"></div>
<div class="a" style="left:357.3px;top:64.8px;width:0.6px;height:5px;background:#777;"></div>
<div class="a" style="left:361.3px;top:64.8px;width:5px;height:5px;border-radius:50%;border:1.3px solid #ddd"></div>
<div class="a" style="left:368.4px;top:64px;width:14px;height:6.5px;background:#2b2b2b;"></div>
<div class="t" style="left:371px;top:65.2px;font-size:4.3px;color:#ddd">0.00</div>
<div class="a" style="left:384.8px;top:65.3px;width:3.7px;height:4px;background:#ddd;"></div>
<div class="a" style="left:391.5px;top:64px;width:12px;height:6.5px;background:#2b2b2b;"></div>
<div class="t" style="left:393.5px;top:65.2px;font-size:4.3px;color:#ddd">1.00</div>
<div class="a" style="left:407.3px;top:63.8px;width:6.4px;height:6.8px;background:#3f9fb8;"></div>
<div class="a" style="left:414.3px;top:63.8px;width:53px;height:6.8px;background:#5a5a5a;"></div>
<div class="t" style="left:416.3px;top:65.1px;font-size:4.4px;color:#ddd">sRGB gamma</div>
<div class="a" style="left:461.50px;top:66.58px;width:0;height:0;border-left:1.48px solid transparent;border-right:1.48px solid transparent;border-top:1.80px solid #ddd"></div>
<div class="a" style="left:480px;top:56.8px;width:66.8px;height:14px;background:transparent;border:0.7px solid #5c5c5c;border-left:none;border-bottom:none"></div>
<div class="t" style="left:553.5px;top:57.5px;font-size:4.6px;letter-spacing:-0.06px;color:#dcdcdc">List</div>
<div class="t" style="left:565.5px;top:57.5px;font-size:4.6px;letter-spacing:-0.06px;color:#dcdcdc">Selected</div>
<div class="t" style="left:588px;top:57.5px;font-size:4.6px;letter-spacing:-0.06px;color:#dcdcdc">Focus</div>
<div class="t" style="left:604.5px;top:57.5px;font-size:4.6px;letter-spacing:-0.06px;color:#dcdcdc">Attributes</div>
<div class="t" style="left:630px;top:57.5px;font-size:4.6px;letter-spacing:-0.06px;color:#dcdcdc">Show</div>
<div class="t" style="left:647px;top:57.5px;font-size:4.6px;letter-spacing:-0.06px;color:#dcdcdc">Help</div>
<div class="a" style="left:725px;top:56px;width:7px;height:15px;background:#494949;"></div>
<div class="t" style="left:726px;top:59px;font-size:4.2px;color:#aaa;transform:rotate(90deg);transform-origin:0 0;margin-left:4.5px">Chan</div>
<svg class="a" style="left:120px;top:70.7px" width="197" height="322.5" viewBox="120 70.7 197 322.5">
<defs><linearGradient id="vg" x1="0" y1="0" x2="0" y2="1"><stop offset="0" stop-color="#8a9ebc"/><stop offset="0.277" stop-color="#7a8ba0"/><stop offset="0.525" stop-color="#606e7d"/><stop offset="0.711" stop-color="#4e5a66"/><stop offset="0.866" stop-color="#39404a"/><stop offset="0.928" stop-color="#2c303a"/><stop offset="0.984" stop-color="#1b1d21"/><stop offset="1" stop-color="#181a1d"/></linearGradient>
<linearGradient id="leg" x1="0" y1="0" x2="0" y2="1"><stop offset="0" stop-color="#8f8f8f"/><stop offset="1" stop-color="#5c5c5c"/></linearGradient>
<linearGradient id="abd" x1="0" y1="0" x2="1" y2="0.4"><stop offset="0" stop-color="#f4f4f4"/><stop offset="0.6" stop-color="#dcdcdc"/><stop offset="1" stop-color="#c4c4c4"/></linearGradient>
<pattern id="mesh" width="1.3" height="1.3" patternUnits="userSpaceOnUse" patternTransform="rotate(28)"><rect width="1.3" height="1.3" fill="none"/><path d="M0 0.3H1.3M0.3 0V1.3" stroke="#ffffff" stroke-width="0.55"/></pattern>
<linearGradient id="abd2" x1="0" y1="0" x2="1" y2="0.5"><stop offset="0" stop-color="#d6d6d6"/><stop offset="0.55" stop-color="#bcbcbc"/><stop offset="1" stop-color="#9c9c9c"/></linearGradient>
<linearGradient id="gl" gradientUnits="userSpaceOnUse" x1="0" y1="71" x2="0" y2="394"><stop offset="0" stop-color="#35425a"/><stop offset="0.5" stop-color="#34404f"/><stop offset="0.72" stop-color="#3c4651"/><stop offset="0.9" stop-color="#3b414a"/><stop offset="1" stop-color="#2c3036"/></linearGradient>
<radialGradient id="thx" cx="0.48" cy="0.42" r="0.6"><stop offset="0" stop-color="#e0e0e0"/><stop offset="0.6" stop-color="#ebebeb"/><stop offset="1" stop-color="#fcfcfc"/></radialGradient>
<filter id="nz" x="0" y="0" width="1" height="1"><feTurbulence type="fractalNoise" baseFrequency="0.85" numOctaves="2" seed="4" result="n"/><feColorMatrix in="n" type="matrix" values="0 0 0 0 0.62  0 0 0 0 0.62  0 0 0 0 0.62  0 0 0 1.9 -0.97" result="m"/><feComposite in="m" in2="SourceGraphic" operator="in" result="c"/><feMerge><feMergeNode in="SourceGraphic"/><feMergeNode in="c"/></feMerge></filter>
</defs>
<rect x="120" y="70.7" width="197" height="322.5" fill="url(#vg)"/>
<path d="M29.1 71.3L-175.5 400M58.5 71.3L-137.9 400M87.9 71.3L-100.3 400M117.3 71.3L-62.7 400M146.7 71.3L-25.1 400M176.1 71.3L12.5 400M205.5 71.3L50.1 400M234.9 71.3L87.7 400M264.3 71.3L125.3 400M293.7 71.3L162.9 400M323.1 71.3L200.5 400M352.5 71.3L238.1 400M381.9 71.3L275.7 400M411.3 71.3L313.3 400M440.7 71.3L350.9 400M470.1 71.3L388.5 400M120 -3.1L320 46.6M120 23.4L320 76.8M120 49.9L320 107.1M120 76.0L320 137.0M120 103.0L320 167.8M120 131.3L320 200.0M120 160.6L320 233.5M120 190.8L320 267.9M120 221.8L320 303.3M120 257.6L320 344.2M120 294.8L320 386.6M120 333.8L320 431.1M120 374.7L320 477.9M120 417.7L320 526.9" stroke="url(#gl)" stroke-width="0.6" fill="none"/>
<path d="M260.7 99 C261.3 90,262.3 80,262.2 70.7" stroke="#9a9a9a" stroke-width="2" fill="none"/><path d="M260.5 99 C261.1 90,262.1 80,262 70.7" stroke="#d4d4d4" stroke-width="0.7" fill="none"/>
<path d="M274.6 109.1 C276.5 105.5,278.7 102,280.8 99 C284 94,287 89.5,290.2 85 C294 80,298 75.5,302.6 70.7" stroke="#9a9a9a" stroke-width="2.1" fill="none"/><path d="M274.3 108.8 C276.2 105.2,278.4 101.7,280.5 98.7 C283.7 93.7,286.7 89.2,289.9 84.7 C293.7 79.7,297.7 75.2,302.3 70.7" stroke="#d8d8d8" stroke-width="0.7" fill="none"/>
<path d="M236.2 91 C231 98,229 108,227.5 117" stroke="#6e6e6e" stroke-width="1.8" fill="none" stroke-linecap="round"/>
<path d="M218.5 118 L225 120.5 L231 131.5" stroke="#585858" stroke-width="5.8" fill="none" stroke-linecap="round" stroke-linejoin="round"/>
<path d="M218.5 118 L225 120.5 L231 131.5" stroke="#828282" stroke-width="4.64" fill="none" stroke-linecap="round" stroke-linejoin="round" transform="translate(-0.2,-0.4)"/>
<path d="M218.5 118 L225 120.5 L231 131.5" stroke="#a4a4a4" stroke-width="1.97" fill="none" stroke-linecap="round" stroke-linejoin="round" transform="translate(-0.4,-0.9)"/>
<path d="M192.5 146 L204.3 131.2 L215.5 150" stroke="#585858" stroke-width="6.8" fill="none" stroke-linecap="round" stroke-linejoin="round"/>
<path d="M192.5 146 L204.3 131.2 L215.5 150" stroke="#828282" stroke-width="5.44" fill="none" stroke-linecap="round" stroke-linejoin="round" transform="translate(-0.2,-0.4)"/>
<path d="M192.5 146 L204.3 131.2 L215.5 150" stroke="#a4a4a4" stroke-width="2.31" fill="none" stroke-linecap="round" stroke-linejoin="round" transform="translate(-0.4,-0.9)"/>
<path d="M262 146 L276 142.5 L296 141.5 L311 140" stroke="#585858" stroke-width="5.6" fill="none" stroke-linecap="round" stroke-linejoin="round"/>
<path d="M262 146 L276 142.5 L296 141.5 L311 140" stroke="#828282" stroke-width="4.48" fill="none" stroke-linecap="round" stroke-linejoin="round" transform="translate(-0.2,-0.4)"/>
<path d="M262 146 L276 142.5 L296 141.5 L311 140" stroke="#a4a4a4" stroke-width="1.90" fill="none" stroke-linecap="round" stroke-linejoin="round" transform="translate(-0.4,-0.9)"/>
<path d="M311 140 L319 135.5" stroke="#777" stroke-width="1.6" fill="none"/>
<path d="M262 160 L270 168.5 L282 154.5 L298.5 173 L309.5 181" stroke="#585858" stroke-width="6.6" fill="none" stroke-linecap="round" stroke-linejoin="round"/>
<path d="M262 160 L270 168.5 L282 154.5 L298.5 173 L309.5 181" stroke="#828282" stroke-width="5.28" fill="none" stroke-linecap="round" stroke-linejoin="round" transform="translate(-0.2,-0.4)"/>
<path d="M262 160 L270 168.5 L282 154.5 L298.5 173 L309.5 181" stroke="#a4a4a4" stroke-width="2.24" fill="none" stroke-linecap="round" stroke-linejoin="round" transform="translate(-0.4,-0.9)"/>
<path d="M186 205.5 L207.5 213 L219 211 L229 203" stroke="#585858" stroke-width="6.4" fill="none" stroke-linecap="round" stroke-linejoin="round"/>
<path d="M186 205.5 L207.5 213 L219 211 L229 203" stroke="#828282" stroke-width="5.12" fill="none" stroke-linecap="round" stroke-linejoin="round" transform="translate(-0.2,-0.4)"/>
<path d="M186 205.5 L207.5 213 L219 211 L229 203" stroke="#a4a4a4" stroke-width="2.18" fill="none" stroke-linecap="round" stroke-linejoin="round" transform="translate(-0.4,-0.9)"/>
<path d="M254 178 C262 174,272 173,284 176 C298 180,310 184,320 188 L320 313 C314 309,310 306,306.8 302.8 C302 298,299 295,297.4 292 C296 287,295 284,292 281.4 C288 277.5,284 274,280 270.7 C273 265,269 262,266.7 257.4 C264 251,262 245,258.7 241.4 C256 238,254 236.5,252.5 235.3 C247 232,245 229.5,243.7 226.6 C242 223,241 220,241 218 C239 205,240 192,243 184Z" fill="#ececec" stroke="#fafafa" stroke-width="0.6"/>
<path d="M250.4 180.5 C262 180.5,270 181.5,277.3 183.6 C285 186,292 190,297.9 193.9 C305 198.5,311 203,320 211 M251 182.3 C262 182.3,270 183.3,276.8 185.4 C284 187.8,291 191.8,297 195.6 C304 200.3,310 205,320 213.6 M254.6 182.5 C262 186,268 190,273.2 193.9 C281 200,288 206.5,293.8 212.5 C302 220.5,310 227.5,320 236.5 M253.6 184 C261 187.6,267 191.6,272 195.4 C280 201.5,287 208,292.6 214 C301 222,309 229.5,320 239 M258.7 185.6 C263 189.5,267.5 193.5,271 198 C276 204.5,280 212,283.5 218.7 C289 227,297 233.5,304 239.3 C309 243,314 247,320 251.5 M257.4 187 C261.7 190.7,266 194.7,269.6 199.2 C274.5 205.7,278.6 213.2,282 220 C287.5 228.3,295.5 235,302.6 240.7 C308 244.5,313 248.5,320 254" stroke="#7e7e7e" stroke-width="0.6" fill="none"/>
<path d="M247 190 C250 200,255 212,262 224 C268 232,276 240,284 246 M250 192 C256 204,262 214,270 224 C276 232,284 240,292 247 M246 196 C244 206,245 218,250 228" stroke="#a6a6a6" stroke-width="0.6" fill="none"/>
<path d="M120 215.5 C128 217.5,135 217.5,141 217 C149 216.3,155 215,161 213.5 C168 212,174 211,180 209.3 C184 208,187 205.5,190 203 C193.5 200.5,196.5 198,199 195 C203 190.5,208 183,210.6 176.2 L212.3 170 L212 165 C210.5 162,209 160,206.7 158.4 C203 155,199 151,194 148.2 C187 145,179 142.5,171 139.2 C163 135.5,154 131,145.5 127.8 C137 125,128 122.3,120 120Z" fill="#ebebeb" stroke="#fbfbfb" stroke-width="0.6"/>
<path d="M120 176.5 C150 175,190 173,210 171.5 L210 173.5 C190 176,150 180,120 181.5Z" fill="#c9ced6" opacity="0.85"/>
<path d="M120 124.5 C150 133,185 146,207 160.5 M120 140 C150 146,190 156,210 167.5 M120 142.5 C150 148.5,190 158,210 168.5 M120 153 C150 158,190 163,210 169.5 M120 166 C150 168,190 169,210 170.5 M120 186 C150 186,185 182,210 174 M130 192 C150 198,185 194,208 177 M128 208 C150 210,182 204,204 184 M150 160 C160 166,172 166,184 162" stroke="#9c9c9c" stroke-width="0.7" fill="none"/>
<path d="M117 194 L163 201.2" stroke="#585858" stroke-width="11.4" fill="none" stroke-linecap="round" stroke-linejoin="round"/>
<path d="M117 194 L163 201.2" stroke="#838383" stroke-width="9.12" fill="none" stroke-linecap="round" stroke-linejoin="round" transform="translate(-0.2,-0.4)"/>
<path d="M117 194 L163 201.2" stroke="#a4a4a4" stroke-width="3.88" fill="none" stroke-linecap="round" stroke-linejoin="round" transform="translate(-0.4,-0.9)"/>
<path d="M234.5 201 C226 216,212 246,200.5 272 C196 282,192 288,189.5 292" stroke="#f4f4f4" stroke-width="3" fill="none"/>
<path d="M176 287.5 C182 287,188.5 291,189 297 C190 305,187 313,183 321 C178 331,172 341,167.5 349 C159 364,148 380,139 394 L120 394 L120 344 C121 340,123.5 333,126.6 327.3 C129 322,132 317,134 314.5 C138 309,144 303.5,150 299.5 C157 295,166 290,176 287.5Z" fill="url(#abd2)"/>
<path d="M176 287.5 C182 287,188.5 291,189 297 C190 305,187 313,183 321 C178 331,172 341,167.5 349 C159 364,148 380,139 394 L120 394 L120 344 C121 340,123.5 333,126.6 327.3 C129 322,132 317,134 314.5 C138 309,144 303.5,150 299.5 C157 295,166 290,176 287.5Z" fill="url(#mesh)" stroke="#f2f2f2" stroke-width="0.9"/>
<clipPath id="abc"><path d="M176 287.5 C182 287,188.5 291,189 297 C190 305,187 313,183 321 C178 331,172 341,167.5 349 C159 364,148 380,139 394 L120 394 L120 344 C121 340,123.5 333,126.6 327.3 C129 322,132 317,134 314.5 C138 309,144 303.5,150 299.5 C157 295,166 290,176 287.5Z"/></clipPath>
<path clip-path="url(#abc)" d="M167 291.5 C174 296,182 298,189 298 M142 305.5 C158 312,172 317,183.5 318.5 M127.5 332 C142 341,156 347,168.5 348.5 M120.5 353 C130 362,142 368,155 370.5" stroke="#ffffff" stroke-width="1.5" fill="none"/>
<path d="M124.2 379.5 L130 382.8" stroke="#d44" stroke-width="0.8"/><path d="M130 382.8 L131.8 378" stroke="#4c7" stroke-width="0.8"/><circle cx="131.9" cy="376.9" r="0.7" fill="#47c"/>
<path d="M240 125.5 C249 123.5,255 130,258.5 141 C262.5 152,264 166,258 176.5 C250 187,242 196,236.5 204 L231 204 C224 196,215.5 180,214.2 166 C213 150,225 131,240 125.5Z" fill="url(#thx)" filter="url(#nz)" stroke="#fafafa" stroke-width="0.8"/>
<path d="M283 251 L290.5 249.5 C292 258,294 268,296 275.5 L293.6 276.8 C290 268,286 259,283 251Z" fill="#707070" stroke="#585858" stroke-width="0.6"/>
<path d="M263.5 232.5 C269 233.5,279 240,286.5 247" stroke="#5c5c5c" stroke-width="9" stroke-linecap="round" fill="none"/>
<path d="M263.5 232 C269 233,279 239.5,286 246.3" stroke="#7c7c7c" stroke-width="7" stroke-linecap="round" fill="none"/>
<path d="M264 230.5 C270 231.5,279 237.5,286 244" stroke="#8c8c8c" stroke-width="2.6" stroke-linecap="round" fill="none"/>
<path d="M301.4 298.8 C305 308,308 320,309.4 329.5 C310.5 338,311.5 350,313 364" stroke="#8e8e8e" stroke-width="2.3" fill="none"/>
<path d="M311 366 L313 363 L314.5 366.5" stroke="#b0b0b0" stroke-width="0.6" fill="none"/>
<path d="M247 99.5 C256 98,266 102,269 110 C271 116,268 121,270.5 126 C271 130,266 131.5,261 130.5 C256 129.5,253 126.5,248 125.5 C241 123,236.5 115,238 108 C239 103,242.5 100.3,247 99.5Z" fill="#2fe57f"/>
<radialGradient id="eye" cx="0.35" cy="0.3" r="0.75"><stop offset="0" stop-color="#9a9a9a"/><stop offset="0.5" stop-color="#6c6c6c"/><stop offset="1" stop-color="#3e3e3e"/></radialGradient>
<ellipse cx="270" cy="115.2" rx="7.4" ry="9" fill="url(#eye)"/>
<path d="M261 201.5 L261 208 L262.6 206.7 L263.7 209 L264.7 208.5 L263.6 206.3 L265.5 206Z" fill="#fff" stroke="#222" stroke-width="0.5"/>
</svg>
<div class="a" style="left:316.8px;top:70.7px;width:415.2px;height:341.3px;background:#e4e4e4;"></div>
<div class="a" style="left:317.2px;top:71px;width:414.8px;height:11px;background:#f0f0f0;"></div>
<div class="t" style="left:607.4px;top:73.6px;font-size:5.6px;color:#333">UV Editor</div>
<svg class="a" style="left:321.6px;top:74px" width="5.2" height="4.6" viewBox="0 0 7 7" preserveAspectRatio="none"><path d="M0.5 0.5 L2.5 0.5 L3.5 2.5 L4.5 0.5 L6.5 0.5 L6.5 6.5 L4.8 6.5 L4.8 3.5 L3.5 5.5 L2.2 3.5 L2.2 6.5 L0.5 6.5Z" fill="#27a9ad"/></svg>
<div class="a" style="left:320.2px;top:82.3px;width:411.8px;height:21.5px;background:#2e2e2e;"></div>
<div class="a" style="left:320.9px;top:83px;width:411.1px;height:20.5px;background:#444;"></div>
<div class="t um" style="left:324.5px">Edit</div>
<div class="t um" style="left:337.5px">Create</div>
<div class="t um" style="left:356px">Select</div>
<div class="t um" style="left:373px">Cut/Sew</div>
<div class="t um" style="left:395px">Modify</div>
<div class="t um" style="left:414.5px">Tools</div>
<div class="t um" style="left:430.5px">View</div>
<div class="t um" style="left:445.5px">Image</div>
<div class="t um" style="left:463px">Textures</div>
<div class="t um" style="left:485px">UV Sets</div>
<div class="t um" style="left:505px">Help</div>
<div class="a" style="left:323.5px;top:93px;width:8px;height:9px;background:#5285a6;"></div>
<div class="a" style="left:325px;top:94.5px;width:5px;height:6px;background:#9ab6c8;"></div>
<div class="a" style="left:334px;top:95px;width:5px;height:5.5px;background:#6aa890;"></div>
<div class="a" style="left:342.5px;top:95px;width:6px;height:5.5px;background:#d8d8d8;"></div>
<div class="a" style="left:351.5px;top:93px;width:8.5px;height:9px;background:#5285a6;"></div>
<div class="a" style="left:353.5px;top:95px;width:4.5px;height:5px;background:#4a8a7a;border:0.6px solid #9cc"></div>
<div class="a" style="left:362px;top:95px;width:5px;height:5.5px;background:transparent;border-left:0.8px solid #aaa;border-bottom:0.8px solid #aaa"></div>
<div class="a" style="left:371px;top:93px;width:8.5px;height:9px;background:#5285a6;"></div>
<div class="a" style="left:373px;top:95px;width:4.5px;height:5px;background:transparent;border:0.8px dotted #e0e8f0"></div>
<div class="a" style="left:381.5px;top:94.5px;width:6px;height:6px;border-radius:50%;border:0.8px solid #ddd"></div>
<div class="a" style="left:383.5px;top:96.5px;width:2px;height:2px;border-radius:50%;background:#fff"></div>
<div class="a" style="left:391.5px;top:95px;width:6.5px;height:5px;background:#e8e8e8;"></div>
<div class="a" style="left:393.5px;top:96.2px;width:2.5px;height:2.5px;background:#333;border-radius:50%"></div>
<svg class="a" style="left:320.5px;top:103.7px" width="411.5" height="308.3" viewBox="320.5 103.7 411.5 308.3">
<rect x="320.5" y="103.7" width="411.5" height="308.3" fill="#a1a1a1"/>
<path d="M320.59 103.7V412M334.81 103.7V412M349.03 103.7V412M363.25 103.7V412M377.47 103.7V412M391.69 103.7V412M405.91 103.7V412M420.13 103.7V412M434.35 103.7V412M448.57 103.7V412M462.79 103.7V412M477.01 103.7V412M491.23 103.7V412M505.45 103.7V412M519.67 103.7V412M533.89 103.7V412M548.11 103.7V412M562.33 103.7V412M590.77 103.7V412M604.99 103.7V412M619.21 103.7V412M633.43 103.7V412M647.65 103.7V412M661.87 103.7V412M676.09 103.7V412M690.31 103.7V412M704.53 103.7V412M320.5 407.20H732M320.5 392.98H732M320.5 378.76H732M320.5 364.54H732M320.5 350.32H732M320.5 336.10H732M320.5 321.88H732M320.5 307.66H732M320.5 293.44H732M320.5 279.22H732M320.5 265.00H732M320.5 250.78H732M320.5 236.56H732M320.5 222.34H732M320.5 208.12H732M320.5 179.68H732M320.5 165.46H732M320.5 151.24H732M320.5 137.02H732M320.5 122.80H732M320.5 108.58H732" stroke="#4a4a4a" stroke-width="0.5" fill="none"/>
<path d="M576.55 103.7V412M718.75 103.7V412M320.5 193.90H732" stroke="#333" stroke-width="0.7" fill="none"/>
<path d="M320.5 336.1H732M434.35 103.7V412" stroke="#3a3ac8" stroke-width="0.8" fill="none"/>
<path d="M434.35 336.1H505.45000000000005" stroke="#d8403a" stroke-width="0.9"/><path d="M433.75 336.1V267.13300000000004" stroke="#72aa72" stroke-width="2.6" opacity="0.85"/>
<text class="ul" x="321.4" y="335.3">-0.8</text>
<text class="ul" x="335.6" y="335.3">-0.7</text>
<text class="ul" x="349.8" y="335.3">-0.6</text>
<text class="ul" x="364.1" y="335.3">-0.5</text>
<text class="ul" x="378.3" y="335.3">-0.4</text>
<text class="ul" x="392.5" y="335.3">-0.3</text>
<text class="ul" x="406.7" y="335.3">-0.2</text>
<text class="ul" x="420.9" y="335.3">-0.1</text>
<text class="ul" x="449.4" y="335.3">0.1</text>
<text class="ul" x="463.6" y="335.3">0.2</text>
<text class="ul" x="477.8" y="335.3">0.3</text>
<text class="ul" x="492.0" y="335.3">0.4</text>
<text class="ul" x="506.3" y="335.3">0.5</text>
<text class="ul" x="520.5" y="335.3">0.6</text>
<text class="ul" x="534.7" y="335.3">0.7</text>
<text class="ul" x="548.9" y="335.3">0.8</text>
<text class="ul" x="563.1" y="335.3">0.9</text>
<text class="ul" x="577.4" y="335.3">1</text>
<text class="ul" x="591.6" y="335.3">1.1</text>
<text class="ul" x="605.8" y="335.3">1.2</text>
<text class="ul" x="620.0" y="335.3">1.3</text>
<text class="ul" x="634.2" y="335.3">1.4</text>
<text class="ul" x="648.5" y="335.3">1.5</text>
<text class="ul" x="662.7" y="335.3">1.6</text>
<text class="ul" x="676.9" y="335.3">1.7</text>
<text class="ul" x="691.1" y="335.3">1.8</text>
<text class="ul" x="705.3" y="335.3">1.9</text>
<text class="ul" x="719.5" y="335.3">2</text>
<text class="ul" x="435.15000000000003" y="406.4">-0.5</text>
<text class="ul" x="435.15000000000003" y="392.2">-0.4</text>
<text class="ul" x="435.15000000000003" y="378.0">-0.3</text>
<text class="ul" x="435.15000000000003" y="363.7">-0.2</text>
<text class="ul" x="435.15000000000003" y="349.5">-0.1</text>
<text class="ul" x="435.15000000000003" y="321.1">0.1</text>
<text class="ul" x="435.15000000000003" y="306.9">0.2</text>
<text class="ul" x="435.15000000000003" y="292.6">0.3</text>
<text class="ul" x="435.15000000000003" y="278.4">0.4</text>
<text class="ul" x="435.15000000000003" y="264.2">0.5</text>
<text class="ul" x="435.15000000000003" y="250.0">0.6</text>
<text class="ul" x="435.15000000000003" y="235.8">0.7</text>
<text class="ul" x="435.15000000000003" y="221.5">0.8</text>
<text class="ul" x="435.15000000000003" y="207.3">0.9</text>
<text class="ul" x="435.15000000000003" y="193.1">1</text>
<text class="ul" x="435.15000000000003" y="178.9">1.1</text>
<text class="ul" x="435.15000000000003" y="164.7">1.2</text>
<text class="ul" x="435.15000000000003" y="150.4">1.3</text>
<text class="ul" x="435.15000000000003" y="136.2">1.4</text>
<text class="ul" x="435.15000000000003" y="122.0">1.5</text>
<text class="ul" x="435.15000000000003" y="107.8">1.6</text>
<text class="ul" x="435.15000000000003" y="335.3">0</text>
<defs><filter id="nz2" x="0" y="0" width="1" height="1"><feTurbulence type="fractalNoise" baseFrequency="0.8" numOctaves="2" seed="9" result="n"/><feColorMatrix in="n" type="matrix" values="0 0 0 0 0.7  0 0 0 0 0.7  0 0 0 0 0.7  0 0 0 1.5 -0.88" result="m"/><feComposite in="m" in2="SourceGraphic" operator="in" result="c"/><feMerge><feMergeNode in="SourceGraphic"/><feMergeNode in="c"/></feMerge></filter></defs>
<g filter="url(#nz2)">
<rect x="437.8" y="196.3" width="37.8" height="24.5" rx="11" ry="11" fill="#fbfbfb"/>
<path d="M480.9 202.1 C483 199.5,486 197.5,489.4 196.7 C492 196,495 195.8,497.2 196.3 C500 195.7,503.5 196,506.4 196.7 C510 197.5,513 199.5,514.9 202.1 C514.5 204.5,513.5 206.5,512.4 208.2 C511.5 210,510.3 211.4,508.8 212.5 C506 215,502 216.2,497.9 216.1 C494 216.2,490.5 215,488.1 212.5 C486 211,484.4 209,483.3 207 C482.2 205.5,481.4 204,480.9 202.1Z" fill="#fbfbfb"/>
<ellipse cx="526.3" cy="207.1" rx="6.8" ry="6.1" fill="#fbfbfb"/>
<rect x="536.2" y="196.5" width="11.2" height="13.3" rx="4.5" ry="4.5" fill="#fbfbfb"/>
<rect x="548" y="201.6" width="26.3" height="26.0" rx="11" ry="11" fill="#fbfbfb"/>
<path d="M505.1 218.5 C507.5 216.5,510.5 215.6,513.6 215.5 C516.5 215.5,519 216.2,520.9 217.3 C522.8 218,524.5 218.7,525.8 219.3 C528 217.5,530.5 216.2,533.1 215.7 C535.5 215.3,537.5 215.5,539.1 216.1 C541 216.6,542.7 217.4,544 218.5 C543.5 222,542.3 225,540.4 227.6 C539 230,537 232,534.3 233.1 C531.5 234.8,528 235.6,524.6 235.5 C521 235.6,517.5 234.8,514.9 233.1 C512.3 231.5,510.2 229.2,508.8 226.4 C507 224,505.8 221.3,505.1 218.5Z" fill="#fbfbfb"/>
<path d="M437 227.6 C437 226,438 225,438.7 225.3 C440.5 226,443 229,444.8 231.1 C446 229.5,447.5 227.7,449.2 226.7 C453 225.4,457 225,461.4 225 C466 225,470 225.4,473.7 226.4 C475.5 227.6,477 229.3,478 231.1 C479.8 228.8,481.8 226,483.3 225 C484.3 224.8,484.8 226.5,484.5 228.5 C484 231,483 233.5,482.4 235.5 C482.9 238.5,483.1 241.5,482.9 244.2 C482.6 247.3,481.8 250.3,480.6 252.9 C479.2 255.8,477.2 258.2,474.5 259.9 C471 261.5,467 262.1,463.2 262 C459 262.2,454.8 261.9,451 260.8 C448 259.7,445.6 257.9,444 255.5 C442.2 252.8,441.2 249.5,440.8 246 C440.5 243,440.5 240,440.8 237.2 C439.8 235.6,438.7 233.8,437.9 232 C437.3 230.5,437 229,437 227.6Z" fill="#fbfbfb"/>
<ellipse cx="500.3" cy="252.6" rx="15.0" ry="25.0" fill="#fbfbfb"/>
<ellipse cx="542.6" cy="252.6" rx="14.4" ry="22.2" fill="#fbfbfb"/>
<rect x="558.2" y="233.5" width="16.6" height="18.4" rx="7.5" ry="7.5" fill="#fbfbfb"/>
<rect x="553" y="261.8" width="23.2" height="28.7" rx="10" ry="10" fill="#fbfbfb"/>
<ellipse cx="450.2" cy="269.5" rx="5.2" ry="4.7" fill="#fbfbfb"/>
<ellipse cx="460.2" cy="266.5" rx="5.1" ry="4.5" fill="#fbfbfb"/>
<ellipse cx="476.6" cy="273.6" rx="9.4" ry="9.4" fill="#fbfbfb"/>
<path d="M437.8 287.1 C438.3 285,439.5 283.6,441.1 282.8 C443.5 281.6,446.5 281.1,449.8 281.2 C453.8 281.2,457.5 281.8,460.8 282.8 C464 284,467 286,469.5 288.2 C471.5 289.8,473.3 291.3,475 292.6 C477 291.3,479.3 289.8,481.5 288.2 C484.5 286,487.8 284,491.3 282.8 C495.5 281.3,500 280.5,504.5 280.6 C508 280.7,511.3 281.8,513.2 283.9 C514.6 285.6,515.3 287.8,515.4 290.4 C515.5 294.5,515 298.5,514.9 302.4 C515 304,515.5 305.4,515.8 306.8 C515.8 311.3,515.3 315.8,514.3 319.9 C513.2 324,511.4 327.8,508.8 330.8 C507 333,504.8 334.7,502.3 335.6 C495.5 336.4,488.5 336.4,481.5 336.3 C481.4 335,480.8 333.8,480 333 C476.5 332.4,472.5 332.4,469 333 C468.3 333.8,467.9 335,467.8 336.3 C462 336.5,456.5 336.4,450.9 335.6 C447.8 334.5,445.3 332.4,443.3 329.7 C441 326.8,439.4 323.5,438.5 319.9 C437.5 315.7,437.1 311.2,437.2 306.8 C436 305.6,435 304.1,434.6 302.4 C434.4 299.4,434.8 296.4,435.6 293.7 C436 291.3,436.8 289,437.8 287.1Z" fill="#fbfbfb"/>
<path d="M517.5 255 C518 252.5,526 252.5,526.3 255 C526 262,525.5 268,525.5 275 L525.3 312 C530 315,534 320,534 326 C534 332,529 336,522.4 336 C516 336,511 332,511 326 C511 320,515 315,519.5 312 L519.3 275 C519 268,518 262,517.5 255Z" fill="#fbfbfb"/>
<ellipse cx="540.8" cy="298.6" rx="15.0" ry="22.8" fill="#fbfbfb"/>
<rect x="559.4" y="295.9" width="15.1" height="12.7" rx="6" ry="6" fill="#fbfbfb"/>
<ellipse cx="564.3" cy="325.1" rx="11.3" ry="10.9" fill="#fbfbfb"/>
<g fill="#ececec" opacity="0.9"><ellipse cx="447" cy="208" rx="5" ry="6"/><ellipse cx="466" cy="208" rx="5" ry="6"/><ellipse cx="456.5" cy="204" rx="6" ry="2.5"/><ellipse cx="456.5" cy="213" rx="6" ry="2.5"/><ellipse cx="494" cy="252" rx="3" ry="18"/><ellipse cx="506" cy="252" rx="3" ry="18"/><ellipse cx="537" cy="252" rx="3" ry="17"/><ellipse cx="548" cy="252" rx="3" ry="17"/><ellipse cx="535" cy="298" rx="3" ry="17"/><ellipse cx="546" cy="298" rx="3" ry="17"/><ellipse cx="561" cy="212" rx="8" ry="3"/><ellipse cx="460" cy="308" rx="10" ry="6" opacity="0.6"/><ellipse cx="494" cy="308" rx="10" ry="6" opacity="0.6"/></g>
</g>
<g fill="#b2b2b2" opacity="0.42" font-family="Liberation Sans,sans-serif" font-weight="bold"><text x="638" y="387.5" font-size="15.5" textLength="86" lengthAdjust="spacingAndGlyphs">GNOMON</text><text x="638" y="401.5" font-size="13" textLength="86" lengthAdjust="spacingAndGlyphs">WORKSHOP</text><text x="629" y="379" font-size="3" transform="rotate(-90 632 379)">THE</text><path d="M608 392 L622 378 L634 378 L622 388 L634 392 L626 401 L612 401Z" /></g>
</svg>
<div class="a" style="left:0px;top:393.2px;width:316.8px;height:18.8px;background:#484848;"></div>
<div class="a" style="left:0px;top:393.2px;width:316.8px;height:0.6px;background:#333;"></div>
<div class="a" style="left:5.5px;top:396px;width:311.3px;height:12.2px;background:#373737;"></div>
<div class="a" style="left:8px;top:397.5px;width:2.8px;height:10px;background:#888;"></div>
<div class="a" style="left:28.7px;top:402px;width:0.7px;height:6.2px;background:#9a9a9a;"></div>
<div class="t" style="left:29.7px;top:397.6px;font-size:3.4px;color:#9a9a9a">5</div>
<div class="a" style="left:54.0px;top:402px;width:0.7px;height:6.2px;background:#9a9a9a;"></div>
<div class="t" style="left:55.0px;top:397.6px;font-size:3.4px;color:#9a9a9a">10</div>
<div class="a" style="left:79.3px;top:402px;width:0.7px;height:6.2px;background:#9a9a9a;"></div>
<div class="t" style="left:80.3px;top:397.6px;font-size:3.4px;color:#9a9a9a">15</div>
<div class="a" style="left:104.6px;top:402px;width:0.7px;height:6.2px;background:#9a9a9a;"></div>
<div class="t" style="left:105.6px;top:397.6px;font-size:3.4px;color:#9a9a9a">20</div>
<div class="a" style="left:130.0px;top:402px;width:0.7px;height:6.2px;background:#9a9a9a;"></div>
<div class="t" style="left:131.0px;top:397.6px;font-size:3.4px;color:#9a9a9a">25</div>
<div class="a" style="left:155.3px;top:402px;width:0.7px;height:6.2px;background:#9a9a9a;"></div>
<div class="t" style="left:156.3px;top:397.6px;font-size:3.4px;color:#9a9a9a">30</div>
<div class="a" style="left:180.6px;top:402px;width:0.7px;height:6.2px;background:#9a9a9a;"></div>
<div class="t" style="left:181.6px;top:397.6px;font-size:3.4px;color:#9a9a9a">35</div>
<div class="a" style="left:205.9px;top:402px;width:0.7px;height:6.2px;background:#9a9a9a;"></div>
<div class="t" style="left:206.9px;top:397.6px;font-size:3.4px;color:#9a9a9a">40</div>
<div class="a" style="left:231.3px;top:402px;width:0.7px;height:6.2px;background:#9a9a9a;"></div>
<div class="t" style="left:232.3px;top:397.6px;font-size:3.4px;color:#9a9a9a">45</div>
<div class="a" style="left:256.6px;top:402px;width:0.7px;height:6.2px;background:#9a9a9a;"></div>
<div class="t" style="left:257.6px;top:397.6px;font-size:3.4px;color:#9a9a9a">50</div>
<div class="a" style="left:281.9px;top:402px;width:0.7px;height:6.2px;background:#9a9a9a;"></div>
<div class="t" style="left:282.9px;top:397.6px;font-size:3.4px;color:#9a9a9a">55</div>
<div class="a" style="left:307.2px;top:402px;width:0.7px;height:6.2px;background:#9a9a9a;"></div>
<div class="t" style="left:308.2px;top:397.6px;font-size:3.4px;color:#9a9a9a">60</div>
<div class="t" style="left:8.5px;top:403px;font-size:3.4px;color:#ddd">1</div>
</body></html>
